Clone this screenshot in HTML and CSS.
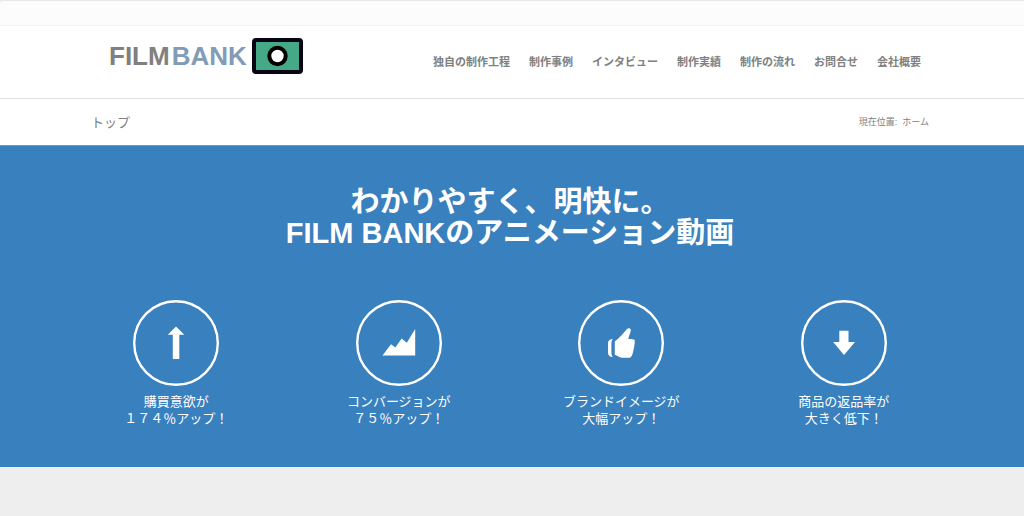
FILE: index.html
```
<!DOCTYPE html>
<html lang="ja">
<head>
    <meta charset="UTF-8">
    <meta name="viewport" content="width=device-width, initial-scale=1.0">
    <title>FILM BANK</title>
    <link rel="stylesheet" href="styles.css">
</head>
<body>
    <div class="top-bar"></div>

    <header class="header container">
        <a class="logo" href="#">
            <span class="logo-text">FILM<span class="logo-bank">BANK</span></span>
            <svg class="logo-mark" width="51" height="36" viewBox="0 0 51 36" aria-hidden="true">
                <rect x="2" y="2" width="47" height="32" rx="2" fill="#45a987" stroke="#090514" stroke-width="4"/>
                <circle cx="25.5" cy="18" r="8.2" fill="#fff" stroke="#000" stroke-width="4"/>
            </svg>
        </a>
        <nav class="nav">
            <a href="#">独自の制作工程</a>
            <a href="#">制作事例</a>
            <a href="#">インタビュー</a>
            <a href="#">制作実績</a>
            <a href="#">制作の流れ</a>
            <a href="#">お問合せ</a>
            <a href="#">会社概要</a>
        </nav>
    </header>

    <div class="title-bar container">
        <h1>トップ</h1>
        <div class="breadcrumb">
            <span>現在位置:</span>
            <a href="#">ホーム</a>
        </div>
    </div>

    <section class="hero container">
        <h2>わかりやすく、明快に。<br>FILM BANKのアニメーション動画</h2>
        <div class="features">
            <div class="feature">
                <svg width="86" height="86" viewBox="0 0 86 86" aria-hidden="true">
                    <circle class="ring" cx="43" cy="43" r="41.8"/>
                    <path d="M43 26.5L51.3 34.7H46.3V59H39.8V34.7H34.8Z"/>
                </svg>
                <p>購買意欲が<br>１７４％アップ！</p>
            </div>
            <div class="feature">
                <svg width="86" height="86" viewBox="0 0 86 86" aria-hidden="true">
                    <circle class="ring" cx="43" cy="43" r="41.8"/>
                    <path d="M26.5 55.5L35 44.3L39.3 47.6L45.7 38.6L50.8 42.8L59.2 29V55.5Z"/>
                </svg>
                <p>コンバージョンが<br>７５％アップ！</p>
            </div>
            <div class="feature">
                <svg width="86" height="86" viewBox="0 0 86 86" aria-hidden="true">
                    <circle class="ring" cx="43" cy="43" r="41.8"/>
                    <path d="M36.8 41.5C41 38 45.5 33.5 48.5 29.5C50 27.6 52.5 27.6 52.8 30C53 32.5 50.5 36 50.3 39C52.5 38.8 55 39 56.8 40C57 44 55.7 49.5 54.8 53C54 56 53 57.8 51 57.8H44C41 57.5 39 55.3 36.8 54.8Z"/>
                    <path d="M34.7 39C31 39.3 30 41 30 44V52.5C30 55.5 31.5 56.8 34.7 57C33.7 55.5 33.4 54 33.4 52V44C33.4 42 33.7 40.5 34.7 39Z"/>
                </svg>
                <p>ブランドイメージが<br>大幅アップ！</p>
            </div>
            <div class="feature">
                <svg width="86" height="86" viewBox="0 0 86 86" aria-hidden="true">
                    <circle class="ring" cx="43" cy="43" r="41.8"/>
                    <path d="M38.3 30.8H47.5V42H54L43 55L32.2 42H38.3Z"/>
                </svg>
                <p>商品の返品率が<br>大きく低下！</p>
            </div>
        </div>
    </section>
</body>
</html>
```
FILE: styles.css
```
* {
    box-sizing: border-box;
}
body {
    margin: 0;
    background: #eee;
    color: #808080;
    font-family: "Liberation Sans", "Noto Sans CJK JP", sans-serif;
}
h1, h2, p {
    margin: 0;
}
a {
    color: inherit;
    text-decoration: none;
}
.container {
    padding-left: 91px;
    padding-right: 95px;
}
.top-bar {
    height: 26px;
    background: #fcfcfc;
    border-top: 1px solid #e8e8e8;
    border-bottom: 1px solid #f2f2f2;
    border-top-left-radius: 4px;
}
.header {
    display: flex;
    justify-content: space-between;
    height: 73px;
    background: #fff;
    border-bottom: 1px solid #e1e1e1;
}
.logo {
    display: flex;
    align-items: center;
    gap: 5px;
    height: 60px;
    padding-left: 18px;
}
.logo-text {
    font-size: 26px;
    font-weight: bold;
    line-height: 30px;
}
.logo-bank {
    margin-left: 2px;
    color: #829bb7;
}
.nav {
    display: flex;
    align-items: center;
    gap: 19px;
    padding-right: 8px;
    padding-bottom: 2px;
    font-size: 11px;
    font-weight: bold;
}
.title-bar {
    display: flex;
    align-items: center;
    justify-content: space-between;
    height: 46px;
    padding-bottom: 2px;
    background: #fff;
}
.title-bar h1 {
    font-size: 13px;
    font-weight: normal;
}
.breadcrumb {
    display: flex;
    gap: 5px;
    font-size: 9px;
}
.hero {
    padding-top: 41px;
    padding-bottom: 40px;
    background: #3980be;
    border-top: 1px solid #7d95a8;
    color: #fff;
    text-align: center;
}
.hero h2 {
    margin-bottom: 51px;
    font-size: 29px;
    line-height: 31px;
}
.features {
    display: grid;
    grid-template-columns: repeat(4, 1fr);
    gap: 52px;
}
.feature svg {
    display: block;
    margin: 0 auto 7px;
    fill: #fff;
}
.feature .ring {
    fill: none;
    stroke: #fff;
    stroke-width: 2.4;
}
.feature p {
    font-size: 13px;
    line-height: 17px;
}
```
